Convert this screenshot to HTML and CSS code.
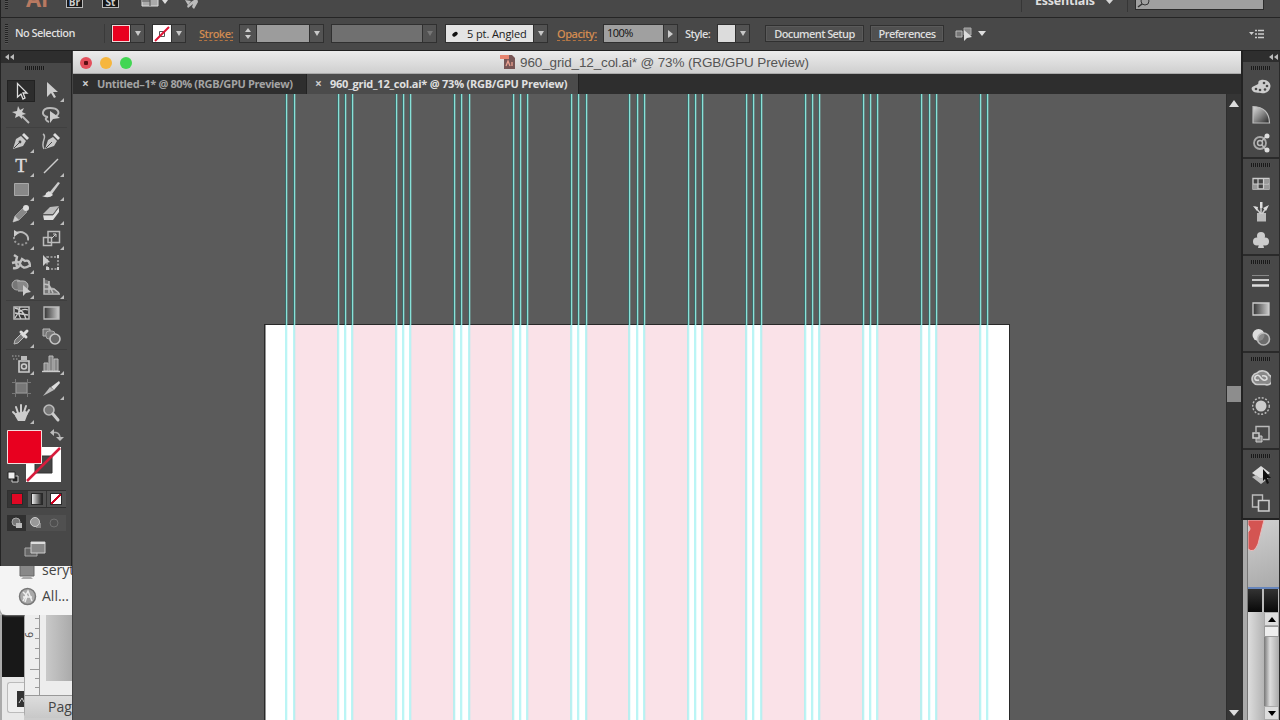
FILE: index.html
```
<!DOCTYPE html>
<html lang="en">
<head>
<meta charset="utf-8">
<title>960_grid_12_col.ai</title>
<link rel="stylesheet" href="styles.css">
</head>
<body>
<header class="appbar">
  <i class="grip-v"></i><b class="ai">Ai</b><span class="mini">Br</span><span class="mini st">St</span>
  <svg class="arrange" width="30" height="17"><path d="M1 -2H17V6H1Z" fill="#aaa" stroke="#ddd"/><path d="M9 -2V6M1 1H9" stroke="#555"/><path d="M21 0H27L24 4Z" fill="#ddd"/></svg>
  <svg class="rocket" width="18" height="17"><path d="M1 0L7 1L4 5ZM7 2L13 -2L14 2L10 9L8 7L9 4L4 8L3 6Z" fill="#bcbcbc"/></svg>
  <div class="workspace"><span>Essentials</span><svg width="8" height="6"><path d="M0 0H7L3.5 4Z" fill="#d5d5d5"/></svg></div>
  <div class="search"><svg width="16" height="8"><circle cx="9" cy="1" r="4" fill="none" stroke="#333"/><path d="M6 4L2 7" stroke="#333" stroke-width="1.5"/></svg></div>
</header>
<div class="control">
  <i class="grip-v"></i><span class="nosel">No Selection</span>
  <div class="combo fill"><i class="sw red"></i><i class="dd"></i></div>
  <div class="combo strk"><svg class="sw" width="18" height="18"><path d="M0 0H18V18H0Z" fill="#fff"/><path d="M6.500 6.500H11.500V11.500H6.500Z" fill="none" stroke="#555"/><path d="M2 16L16 2" stroke="#dc1434" stroke-width="2"/></svg><i class="dd"></i></div>
  <a class="link stroke-label">Stroke:</a>
  <div class="combo weight"><i class="step"></i><i class="field"></i><i class="dd big"></i></div>
  <div class="combo profile"><i class="field"></i><i class="dd dim"></i></div>
  <div class="combo brush"><span class="field"><svg width="8" height="8"><path d="M3 5L5 3.500" stroke="#111" stroke-width="3.500" stroke-linecap="round"/></svg>5 pt. Angled</span><i class="dd big"></i></div>
  <a class="link opacity-label">Opacity:</a>
  <div class="combo opacity"><span class="field">100%</span><i class="dd flyout"></i></div>
  <span class="style-label">Style:</span>
  <div class="combo style"><i class="sw"></i><i class="dd big"></i></div>
  <button class="btn setup">Document Setup</button><button class="btn prefs">Preferences</button>
  <svg class="align" width="32" height="16"><path d="M1 5H7V11H1Z" fill="#777" stroke="#bbb"/><path d="M9 2H16V9H9Z" fill="#888" stroke="#aaa"/><path d="M9 4V15L12 12L17 11Z" fill="#ddd"/><path d="M23 5H31L27 10Z" fill="#ddd"/></svg>
  <svg class="menu" width="16" height="12"><path d="M0 4H5L2.500 7Z" fill="#ccc"/><path d="M6 2.500H8M9 2.500H15M6 6H8M9 6H15M6 9.500H8M9 9.500H15" stroke="#ccc" stroke-width="1.500"/></svg>
</div>
<main class="work">
  <aside class="left">
    <section class="toolbox">
      <div class="collapse"><svg width="9" height="6"><path d="M4 0V6L0 3ZM9 0V6L5 3Z" fill="#bbb"/></svg></div>
      <i class="grip"></i>
      <div class="tools g1">
        <span class="tool active"><svg viewBox="0 0 20 20"><path d="M6.500 2.500V16L10 13L12 18L14 17L12 12L16 12Z" fill="#222" stroke="#ddd" stroke-width="1.300"/></svg></span>
        <span class="tool sub"><svg viewBox="0 0 20 20"><path d="M6 1V16L10 12L13 17L15 16L12 11L17 11Z" fill="#ccc"/></svg></span>
        <span class="tool"><svg viewBox="0 0 20 20"><path d="M7 1L9 5L13 3L11 7L15 9L11 10L11 14L8 11L4 13L5 9L1 7L6 6Z" fill="#ccc"/><path d="M11 11L18 18" stroke="#bbb" stroke-width="2"/></svg></span>
        <span class="tool"><svg viewBox="0 0 20 20"><path d="M7 12C-1 11 1 3 9 3S20 8 15 11M7 12C3 13 5 16 8 17" fill="none" stroke="#b8b8b8" stroke-width="2"/><path d="M9 6V18L12 14L19 13Z" fill="#ccc"/></svg></span>
      </div>
      <div class="tools g2">
        <span class="tool sub"><svg viewBox="0 0 20 20"><path d="M2 17L5 7L10 4L15 9L12 14Z" fill="#c8c8c8"/><path d="M11 3L13 1L18 6L16 8Z" fill="#ddd"/><path d="M3 16L9 10" stroke="#484848"/><circle cx="9" cy="10" r="1.400" fill="#484848"/></svg></span>
        <span class="tool"><svg viewBox="0 0 20 20"><path d="M4 17L7 8L12 5L16 9L13 14Z" fill="#c8c8c8"/><path d="M12 3L14 1L19 6L17 8Z" fill="#ddd"/><path d="M5 16L11 10" stroke="#484848"/><path d="M2 2C7 5-1 9 3 17" fill="none" stroke="#bbb" stroke-width="1.500"/></svg></span>
        <span class="tool sub type">T</span>
        <span class="tool sub"><svg viewBox="0 0 20 20"><path d="M3 17L17 3" stroke="#ccc" stroke-width="1.500"/></svg></span>
        <span class="tool sub"><svg viewBox="0 0 20 20"><path d="M3.500 3.500H17.500V15.500H3.500Z" fill="#888" stroke="#a8a8a8"/></svg></span>
        <span class="tool sub"><svg viewBox="0 0 20 20"><path d="M8 13L17 2L19 3L11 14Z" fill="#ccc"/><path d="M8 11L12 15Q8 19 1 16Q5 16 5 13Z" fill="#ddd"/></svg></span>
        <span class="tool sub"><svg viewBox="0 0 20 20"><path d="M2 18L4 12L12 4L16 8L8 16Z" fill="#888" stroke="#999"/><circle cx="15" cy="4" r="3" fill="#ddd"/><path d="M2 18L4 12L8 16Z" fill="#ccc"/></svg></span>
        <span class="tool sub"><svg viewBox="0 0 20 20"><path d="M9 3L18 2L12 10H2Z" fill="#bbb"/><path d="M2 11H12V16H3ZM12 11L18 3V8L12 16Z" fill="#ddd"/><path d="M2 11H12L18 3" fill="none" stroke="#666"/></svg></span>
      </div>
      <div class="tools g3">
        <span class="tool sub"><svg viewBox="0 0 20 20"><path d="M4 6C11 1 18 7 17 12" fill="none" stroke="#bbb" stroke-width="2"/><path d="M3 2V9L8 5Z" fill="#ccc"/><path d="M3 9C2 17 15 20 17 12" fill="none" stroke="#999" stroke-width="2" stroke-dasharray="2 2"/></svg></span>
        <span class="tool sub"><svg viewBox="0 0 20 20"><path d="M7 3.500H18.500V14.500H7ZM2.500 9.500H10.500V17.500H2.500Z" fill="none" stroke="#bbb" stroke-width="1.500"/><path d="M10 11L15 6M12 6H15V9" fill="none" stroke="#ccc"/></svg></span>
        <span class="tool sub"><svg viewBox="0 0 20 20"><path d="M3 2L6 4L5 8L9 10L11 6L14 8Q19 6 19 14M2 15Q8 16 9 11Q12 17 18 13M1 10L5 9L6 14" fill="none" stroke="#c0c0c0" stroke-width="2.400"/></svg></span>
        <span class="tool"><svg viewBox="0 0 20 20"><path d="M6 4H17V16H6Z" fill="none" stroke="#aaa" stroke-width="1.500" stroke-dasharray="2 1.500"/><path d="M16 2H18V5H16ZM16 14H18V17H16ZM5 14H8V17H5Z" fill="#ccc"/><path d="M2 2V13L5 10L9 9Z" fill="#ccc"/></svg></span>
        <span class="tool sub"><svg viewBox="0 0 20 20"><circle cx="6" cy="8" r="5" fill="#777" stroke="#aaa"/><path d="M6 4H12A5 5 0 0 1 12 14H7" fill="#888" stroke="#bbb"/><path d="M12 8V19L15 16L20 15Z" fill="#ccc"/></svg></span>
        <span class="tool sub"><svg viewBox="0 0 20 20"><path d="M3 2L8 4V9L13 11L18 16H3Z" fill="#777"/><path d="M3 1V17H19M8 4V16M3 7L8 8L12 16M3 12L13 12L18 16" fill="none" stroke="#c0c0c0" stroke-width="1.500"/></svg></span>
      </div>
      <div class="tools g4">
        <span class="tool"><svg viewBox="0 0 20 20"><path d="M3 4H18V16H3Z" fill="#383838" stroke="#bbb" stroke-width="1.500"/><path d="M4 15Q10 4 17 7M4 5Q13 7 15 16M4 10L17 12M9 4Q6 10 10 16" fill="none" stroke="#ccc" stroke-width="1.300"/></svg></span>
        <span class="tool"><svg viewBox="0 0 20 20"><path d="M3 4H18V16H3Z" fill="url(#gr)" stroke="#bbb" stroke-width="1.300"/></svg></span>
        <span class="tool sub"><svg viewBox="0 0 20 20"><path d="M3 17L4 13L10 7L13 10L7 16Z" fill="#777" stroke="#bbb"/><path d="M10 5L15 10M12 8L16 4" stroke="#ddd" stroke-width="3" stroke-linecap="round"/></svg></span>
        <span class="tool"><svg viewBox="0 0 20 20"><path d="M2 2H9V9H2Z" fill="#777" stroke="#bbb"/><rect x="5" y="4" width="9" height="8" rx="3" fill="#777" stroke="#aaa"/><circle cx="14" cy="12" r="5" fill="#666" stroke="#c5c5c5" stroke-width="1.600"/></svg></span>
      </div>
      <div class="tools g5">
        <span class="tool sub"><svg viewBox="0 0 20 20"><path d="M8 7H18V18H8Z" fill="#555" stroke="#ccc" stroke-width="1.600"/><path d="M10 2H16V6H10Z" fill="#bbb"/><circle cx="13" cy="12.500" r="2.500" fill="none" stroke="#ccc" stroke-width="1.500"/><path d="M1 2H9M2 5H8" stroke="#aaa" stroke-dasharray="1.500 1.500"/></svg></span>
        <span class="tool sub"><svg viewBox="0 0 20 20"><path d="M3 9H7V17H3ZM8 2H12V17H8ZM13 5H17V17H13Z" fill="#888" stroke="#bbb"/><path d="M1 17.500H19" stroke="#ccc" stroke-width="1.400"/></svg></span>
        <span class="tool"><svg viewBox="0 0 20 20"><path d="M5 5H16V15H5Z" fill="#777" stroke="#999"/><path d="M1 4.500H20M1 15.500H20M4.500 1V19M16.500 1V19" stroke="#777"/></svg></span>
        <span class="tool sub"><svg viewBox="0 0 20 20"><path d="M2 18L9 9L13 12Z" fill="#bbb"/><path d="M10 9L18 3L19 5L13 12Z" fill="#ddd"/></svg></span>
        <span class="tool sub"><svg viewBox="0 0 20 20"><path d="M7 10L5 4M10 9V2M13 9L15 3M15 12L18 7M6 13L2 9" stroke="#ccc" stroke-width="2" stroke-linecap="round"/><path d="M5 10L15 8L17 10L14 18H7L4 13Z" fill="#ccc"/></svg></span>
        <span class="tool"><svg viewBox="0 0 20 20"><circle cx="8" cy="7" r="5" fill="#777" stroke="#bbb" stroke-width="1.600"/><path d="M12 11L17 17" stroke="#ccc" stroke-width="3" stroke-linecap="round"/></svg></span>
      </div>
      <svg class="colors" width="64" height="62"><path d="M20 21H55V56H20Z" fill="#fff"/><path d="M29 30H46V47H29Z" fill="#444" stroke="#333"/><path d="M21 55L54 22" stroke="#d71c3c" stroke-width="2.500"/><path d="M1.500 4.500H35.500V37.500H1.500Z" fill="#e8001f" stroke="#f2dede"/><path d="M46 6.500H50Q54 7 54 13" fill="none" stroke="#aaa" stroke-width="1.700"/><path d="M48 3V10L44 6.500ZM50 11H58L54 15Z" fill="#bbb"/><path d="M6 50H12V56H6Z" fill="#222" stroke="#ccc"/><path d="M2 46H9V53H2Z" fill="#eee" stroke="#222"/></svg>
      <div class="modes"><i><b class="m-red"></b></i><i><b class="m-gray"></b></i><i><b class="m-none"></b></i></div>
      <div class="draws">
        <svg class="pressed" viewBox="0 0 19 16"><circle cx="9" cy="7" r="4" fill="#777" stroke="#aaa"/><path d="M9 8H15V13H9Z" fill="#bbb"/></svg>
        <svg viewBox="0 0 19 16"><path d="M10 8H15V13H10Z" fill="#888"/><circle cx="9" cy="7" r="4.500" fill="#999" stroke="#ccc"/></svg>
        <svg viewBox="0 0 19 16"><circle cx="9" cy="8" r="4" fill="#505050" stroke="#707070"/></svg>
      </div>
      <svg class="screen" width="24" height="18"><path d="M2 8H14V16H2Z" fill="#666" stroke="#aaa"/><path d="M8 2H22V13H8Z" fill="#888" stroke="#ccc"/><path d="M8 3H22" stroke="#ddd" stroke-width="2"/></svg>
    </section>
    <section class="behind-left">
      <div class="popup">
        <div class="row"><svg width="18" height="16"><path d="M2 -2H16V10H2Z" fill="#888" stroke="#666"/><path d="M5 11H13L15 13H3Z" fill="#aaa"/></svg><span>seryt</span></div>
        <div class="row all"><svg width="19" height="19"><circle cx="9.500" cy="9.500" r="8" fill="#aaa" stroke="#777" stroke-width="1.500"/><path d="M5 14L10 4L14 14M5 10H14M5 5L9 9L7 15" fill="none" stroke="#eee" stroke-width="1.500"/></svg><span>All...</span></div>
      </div>
      <div class="under"><div class="strip"><i></i><span><svg width="12" height="18"><path d="M3 1H12V17H3Z" fill="#333"/><path d="M5 13L8 8L10 12L12 9" stroke="#ccc" fill="none"/></svg></span></div>
        <div class="sheet"><div class="ruler"><svg width="15" height="80"><path d="M14.500 0V80M10 3.500H15M10 13.500H15M10 23.500H15M10 33.500H15M10 43.500H15M5 54.500H15M10 63.500H15M10 72.500H15" stroke="#999"/></svg><b>6</b><i></i></div><div class="page">Page</div></div>
      </div>
    </section>
  </aside>
  <section class="doc">
    <div class="titlebar"><i class="dot close"></i><i class="dot min"></i><i class="dot max"></i>
      <svg class="file" width="16" height="16"><path d="M4 1H12L15 4V15H4Z" fill="#755" /><path d="M0 1H9V5H0Z" fill="#e68570"/><path d="M6 12L8 7L10 12M12 8V12" stroke="#eaa090" fill="none" stroke-width="1.300"/></svg>
      <span class="title">960_grid_12_col.ai* @ 73% (RGB/GPU Preview)</span></div>
    <nav class="tabs"><div class="tab"><i>×</i><span>Untitled–1* @ 80% (RGB/GPU Preview)</span></div><div class="tab current"><i>×</i><span>960_grid_12_col.ai* @ 73% (RGB/GPU Preview)</span></div></nav>
    <div class="view">
      <svg class="canvas" id="canvas" width="1154" height="626"></svg>
      <div class="scroll"><svg width="10" height="7"><path d="M0 7L5 0L10 7Z" fill="#ddd"/></svg><i></i><svg width="10" height="7"><path d="M0 0H10L5 6Z" fill="#ddd"/></svg></div>
    </div>
  </section>
  <aside class="right">
    <div class="dock">
      <div class="collapse"><svg width="9" height="6"><path d="M4 0V6L0 3ZM9 0V6L5 3Z" fill="#bbb"/></svg></div>
      <section class="panel"><i class="grip"></i>
        <svg viewBox="0 0 20 20"><path d="M10 3C16 2 19.500 6 19.500 9C19 15 14 17 10 16C7 15 3 17 1 13C-1 9 5 9 7 7C8 6 6 4 10 3Z" fill="#cdcdcd"/><g fill="#484848"><circle cx="13" cy="6" r="1.300"/><circle cx="16" cy="9" r="1.300"/><circle cx="14" cy="12.500" r="1.300"/><circle cx="9" cy="13" r="1.300"/><circle cx="5" cy="12" r="1.300"/></g></svg>
        <svg viewBox="0 0 20 20"><path d="M2 1.500Q18 2 18.500 18H2Z" fill="url(#gg)" stroke="#bbb" stroke-width="1.200"/></svg>
        <svg viewBox="0 0 20 20"><circle cx="9" cy="10" r="6" fill="none" stroke="#aaa" stroke-width="1.800"/><circle cx="9" cy="10" r="2.500" fill="none" stroke="#bbb" stroke-width="1.500"/><path d="M11 8L16 2M11 12L16 18" stroke="#bbb" stroke-width="1.500"/><circle cx="16" cy="3" r="2.500" fill="#ddd"/><circle cx="16" cy="17" r="2.500" fill="#ddd"/></svg>
      </section>
      <section class="panel"><i class="grip"></i>
        <svg viewBox="0 0 20 20"><path d="M2 4.500H18V15H2Z" fill="#444" stroke="#ccc" stroke-width="1.300"/><path d="M12 5H18V9.500H12ZM2 10H7V15H2ZM12 10H18V15H12Z" fill="#999"/><path d="M7 5V15M12.500 5V15M2 10H18" stroke="#ccc" stroke-width="1.200"/></svg>
        <svg viewBox="0 0 20 20"><path d="M6 11H15V19.500H6Z" fill="#bbb"/><path d="M10 12L4 5M10 12V3M11 12L15 6" stroke="#ccc" stroke-width="1.500"/><path d="M2 4L7 5L6 9ZM9 0H11.500V6H9ZM12 6L18 3L15 9Z" fill="#ddd"/></svg>
        <svg viewBox="0 0 20 20"><circle cx="10" cy="6" r="4" fill="#ccc"/><circle cx="6" cy="11.500" r="4" fill="#ccc"/><circle cx="14" cy="11.500" r="4" fill="#ccc"/><path d="M9 9H11L13 18H7Z" fill="#ccc"/></svg>
      </section>
      <section class="panel"><i class="grip"></i>
        <svg viewBox="0 0 20 20"><path d="M1 4.500H18" stroke="#888"/><path d="M1 9H18" stroke="#ccc" stroke-width="2"/><path d="M1 14.500H18" stroke="#ddd" stroke-width="2.500"/></svg>
        <svg viewBox="0 0 20 20"><path d="M2 4H18V16H2Z" fill="url(#gr)" stroke="#ccc" stroke-width="1.300"/></svg>
        <svg viewBox="0 0 20 20"><circle cx="7.500" cy="8" r="6" fill="#ddd"/><circle cx="12.500" cy="12" r="6" fill="#777" fill-opacity=".8" stroke="#bbb" stroke-width="1.600"/></svg>
      </section>
      <section class="panel"><i class="grip"></i>
        <svg viewBox="0 0 20 20"><path d="M6 16.500H14A5 5 0 0 0 18 7A7 6 0 0 0 6 5A6 6 0 0 0 2 14Q4 16.500 6 16.500Z" fill="#888" stroke="#ccc" stroke-width="1.700"/><path d="M8 12Q3 13 4 9Q7 5 10 10Q13 14 16 11Q16 7 11 8" fill="none" stroke="#ddd" stroke-width="1.600"/></svg>
        <svg viewBox="0 0 20 20"><circle cx="10" cy="10" r="5.500" fill="#ccc"/><circle cx="10" cy="10" r="8.300" fill="none" stroke="#bbb" stroke-width="1.400" stroke-dasharray="2 1.600"/></svg>
        <svg viewBox="0 0 20 20"><path d="M5 8V2.500H18V15.500H12" fill="none" stroke="#bbb" stroke-width="1.400"/><path d="M5 12H11V18H5Z" fill="#888" stroke="#ccc"/><path d="M2 9H8V14H2Z" fill="#555" stroke="#ccc" stroke-width="1.500"/></svg>
      </section>
      <section class="panel last"><i class="grip"></i>
        <svg viewBox="0 0 20 20"><path d="M10 1L19 8L10 14L1 8Z" fill="#ddd"/><path d="M1 12L5 10L10 14L15 10L19 12L10 19Z" fill="#bbb"/><path d="M12 4L20 13L16 13L18 18L16 19L14 14L12 16Z" fill="#111"/></svg>
        <svg viewBox="0 0 20 20"><path d="M1.500 2H11.500V14H1.500Z" fill="none" stroke="#bbb" stroke-width="1.400"/><path d="M7.500 7.500H18V18H7.500Z" fill="#484848" stroke="#ccc" stroke-width="1.600"/></svg>
      </section>
    </div>
    <div class="behind-right"><i class="edge"></i><div class="rcontent">
      <svg class="pic" width="31" height="69"><path d="M0 0H16L10 24Q6 34 0 29V12Q4 9 0 5Z" fill="#d45552" stroke="#e9bcbc"/></svg>
      <div class="black"><i></i><i></i></div>
      <div class="rbottom"><i class="sheetbg"></i><div class="rscroll"><b><svg width="8" height="5"><path d="M0 5L4 0L8 5Z"/></svg></b><u></u><i></i><b><svg width="8" height="5"><path d="M0 0H8L4 5Z"/></svg></b></div></div>
    </div></div>
  </aside>
</main>
<svg class="defs" width="0" height="0"><defs><linearGradient id="gr"><stop stop-color="#333"/><stop offset="1" stop-color="#ccc"/></linearGradient><linearGradient id="gg" x1="0" y1="0" x2="1" y2="1"><stop stop-color="#ddd"/><stop offset=".5" stop-color="#888"/><stop offset="1" stop-color="#222"/></linearGradient></defs></svg>
<script src="grid.js"></script>
</body>
</html>
```
FILE: styles.css
```
* { box-sizing: border-box; }
body { margin: 0; width: 1280px; height: 720px; overflow: hidden; display: flex; flex-direction: column; background: #484848; font-family: "Open Sans", "Noto Sans", sans-serif; font-size: 11px; color: #dedede; }
svg { display: block; flex: none; }
i, b, u { display: block; font-style: normal; text-decoration: none; flex: none; }
.defs { position: absolute; }
.appbar { height: 18px; flex: none; display: flex; align-items: flex-start; overflow: hidden; border-bottom: 1px solid #252525; border-left: 1px solid #222; }
.grip-v { width: 3px; height: 20px; margin-left: 4px; background: repeating-linear-gradient(#222 0 1px, #555 1px 2px); }
.appbar .grip-v { height: 9px; }
.ai { margin: -18px 0 0 18px; width: 40px; font: bold 22px/33px "Open Sans", sans-serif; color: #b87961; }
.mini { margin-top: -8px; width: 17px; height: 16px; background: #171717; border: 1px solid #bbb; font: bold 10px/18px "Open Sans", sans-serif; text-align: center; color: #ccc; }
.mini.st { margin-left: 19px; }
.arrange { margin-left: 22px; }
.rocket { margin-left: 13px; }
.workspace { margin-left: 819px; width: 107px; height: 12px; border: solid #363636; border-width: 0 1px; padding-left: 13px; display: flex; gap: 9px; align-items: flex-start; font-weight: 700; font-size: 12.5px; letter-spacing: -.2px; }
.workspace span { margin-top: -8px; line-height: 18px; width: 62px; }
.search { margin-left: 7px; width: 129px; height: 10px; background: #a0a0a0; border: solid #2c2c2c; border-width: 0 1px 1px; }
.control { height: 33px; padding-bottom: 1px; flex: none; display: flex; align-items: center; border-bottom: 1px solid #202020; border-left: 1px solid #222; white-space: nowrap; font-weight: 600; }
.nosel { margin-left: 7px; width: 90px; height: 19px; line-height: 17px; border-right: 1px solid #3a3a3a; letter-spacing: -.55px; }
.combo { display: flex; height: 19px; border: 1px solid #303030; background: #303030; gap: 1px; flex: none; }
.fill { margin-left: 6px; }
.strk { margin-left: 7px; }
.sw { width: 18px; height: 17px; background: #dcdcdc; }
.red { background: #e8001f; border: 1px solid #f2d6d6; }
.dd { width: 13px; background: #535353; display: grid; place-items: center; }
.dd::after { content: ""; border: 3px solid transparent; border-top: 5px solid #c8c8c8; border-bottom: 0; }
.big::after { border-width: 5px 3.5px 0; }
.dim::after { border-top-color: #777; }
.flyout::after { border: 4px solid transparent; border-left: 5px solid #ccc; border-right: 0; }
.link { color: #d18b51; height: 15px; line-height: 15px; border-bottom: 1px dashed #b47342; }
.stroke-label { margin-left: 13px; width: 34px; letter-spacing: -.5px; }
.weight { margin-left: 6px; }
.step { width: 16px; background: #525252; display: flex; flex-direction: column; align-items: center; justify-content: center; gap: 3px; }
.step::before { content: ""; border: 3px solid transparent; border-top: 0; border-bottom: 4px solid #ccc; }
.step::after { content: ""; border: 3px solid transparent; border-bottom: 0; border-top: 4px solid #ccc; }
.field { background: #9c9c9c; width: 52px; color: #202020; font-weight: 400; line-height: 16px; }
.profile { margin-left: 7px; }
.profile .field { width: 90px; background: #707070; }
.brush { margin-left: 8px; }
.brush .field { background: #e4e4e4; width: 87px; display: flex; align-items: center; gap: 8px; padding-left: 5px; letter-spacing: -.1px; }
.opacity-label { margin-left: 9px; width: 40px; letter-spacing: -.5px; }
.opacity { margin-left: 6px; }
.opacity .field { width: 59px; padding-left: 3px; background: #a0a0a0; color: #111; letter-spacing: -.5px; }
.style-label { margin-left: 7px; width: 26px; letter-spacing: -.6px; }
.style { margin-left: 6px; }
.style .sw { width: 17px; }
.btn { height: 17px; padding: 0; border: 1px solid #303030; outline: 1px solid #5a5a5a; outline-offset: -2px; background: #505050; color: #ddd; font: 600 11px/14px "Open Sans", sans-serif; letter-spacing: -.6px; }
.setup { width: 99px; margin-left: 15px; }
.prefs { width: 74px; margin-left: 6px; }
.align { margin-left: 11px; }
.menu { margin-left: auto; margin-right: 15px; }
.work { height: 669px; display: flex; flex: none; }
.left { width: 72px; flex: none; }
.toolbox { height: 515px; border: solid #242424; border-width: 0 1px; background: #484848; }
.collapse { height: 12px; background: #2e2e2e; padding: 3px 0 0 4px; }
.grip { width: 20px; height: 4px; margin: 0 auto; background: repeating-linear-gradient(90deg, #191919 0 1px, #4b4b4b 1px 2px); }
.toolbox .grip { margin: 3px 0 0 24px; }
.tools { display: grid; grid-template-columns: 30px 30px; grid-auto-rows: 24px; margin: 0 4px 0 5px; }
.g1 { margin-top: 9px; border-bottom: 1px solid #404040; }
.g2 { margin-top: 2px; }
.g3 { margin-top: 0; grid-auto-rows: 24.5px; border-bottom: 1px solid #3e3e3e; }
.g4 { border-bottom: 1px solid #3e3e3e; }
.g5 { margin-top: 2px; grid-auto-rows: 24.5px; }
.tool { position: relative; display: grid; place-items: center; }
.tool svg { width: 20px; height: 20px; }
.active { background: #2d2d2d; border: 1px solid #222; height: 22px; width: 28px; margin: 1px; }
.sub::after { content: ""; position: absolute; right: 2px; bottom: 1px; border: solid transparent; border-width: 0 0 4px 4px; border-bottom-color: #bbb; }
.type { font: 19px/20px "Liberation Serif", serif; color: #ddd; -webkit-text-stroke: .4px #ddd; }
.colors { margin: 1px 0 0 5px; }
.modes, .draws { display: flex; width: 59px; margin-left: 6px; background: #353535; gap: 1px; }
.modes { height: 18px; margin-top: 2px; border: 1px solid #303030; }
.modes i { width: 18.5px; padding: 2px 3px; }
.modes i + i { background: #525252; }
.modes b { width: 12px; height: 12px; border: 1px solid #292929; }
.m-red { background: #e00824; } .m-gray { background: linear-gradient(90deg, #eee, #222); } .m-none { background: linear-gradient(135deg, #fff 43%, #d00020 43% 57%, #fff 57%); }
.draws { height: 16px; margin-top: 7px; background: #505050; gap: 0; }
.draws svg { width: 19px; height: 16px; } .pressed { background: #303030; }
.screen { margin: 9px 0 0 22px; }
.behind-left { height: 154px; background: #ccc; overflow: hidden; color: #444; font: 14px/18px "Open Sans", sans-serif; }
.popup { height: 49px; background: #f4f4f4; border-radius: 0 0 0 6px; padding-left: 18px; box-shadow: 0 1px 2px #777; position: relative; }
.row { display: flex; gap: 6px; height: 17px; }
.row span { margin-top: -5px; }
.row.all { height: 30px; padding-top: 4px; gap: 5px; }
.row.all span { margin-top: 0; }
.under { display: flex; height: 105px; }
.strip { width: 24px; background: #e8e8e8; border-left: 2px solid #aaa; }
.strip i { height: 62px; background: #181818; }
.strip span { display: block; margin: 5px 0 0 5px; height: 31px; padding: 7px 0 0 6px; border: 1px solid #bbb; border-right: 0; border-radius: 3px 0 0 3px; background: #eee; }
.sheet { width: 48px; height: 103px; background: #dadada; border-left: 1px solid #aaa; border-radius: 0 0 0 5px; }
.ruler { height: 80px; display: flex; background: #ededed; position: relative; }
.ruler b { position: absolute; left: 1px; top: 12px; font: 10px/16px "Open Sans", sans-serif; transform: rotate(-90deg); }
.ruler i { margin-left: 6px; width: 26px; height: 66px; background: linear-gradient(90deg, #c9c9c9, #aaa); }
.page { padding: 2px 0 0 23px; height: 23px; line-height: 18px; border-top: 1px solid #999; background: linear-gradient(#ddd, #c8c8c8); }
.doc { width: 1169px; flex: none; display: flex; flex-direction: column; border-left: 1px solid #444; }
.titlebar { height: 23px; flex: none; display: flex; align-items: center; background: linear-gradient(#ececec, #cfcfcf); border-bottom: 1px solid #aaa; padding-left: 7px; padding-bottom: 0; }
.dot { width: 12px; height: 12px; border-radius: 50%; margin: 1px 8px 0 0; }
.close { background: radial-gradient(#5c1015 0 2px, #e3505c 2.5px); } .min { background: #f6b63e; } .max { background: #42d653; }
.file { margin-left: 360px; }
.title { margin-left: 4px; margin-top: 1px; font: 13.5px/20px "Liberation Sans", sans-serif; letter-spacing: -.13px; color: #555; white-space: nowrap; }
.tabs { height: 20px; flex: none; display: flex; background: #2e2e2e; font-size: 11px; line-height: 19px; font-weight: 700; white-space: nowrap; }
.tab { width: 234px; display: flex; color: #a3a3a3; border-right: 1px solid #222; padding-left: 9px; letter-spacing: -.37px; }
.tab i { width: 15px; font-size: 12px; line-height: 19px; color: #ccc; }
.current { width: 272px; background: #4b4b4b; color: #e0e0e0; padding-left: 8px; letter-spacing: -.23px; }
.view { display: flex; height: 626px; }
.canvas { width: 1153px; background: #5b5b5b; }
.scroll { width: 15px; background: #353535; display: flex; flex-direction: column; align-items: center; padding: 6px 0 3px; border-left: 1px solid #2e2e2e; }
.scroll i { width: 14px; height: 16px; background: #8d8d8d; margin: 279px 0 auto; }
.right { width: 39px; flex: none; border-right: 1px solid #2a2a2a; }
.dock { height: 469px; background: #484848; border: solid #222; border-width: 0 0 2px 2px; }
.dock .collapse { padding: 3px 0 0 26px; height: 11px; }
.panel { height: 97px; padding-top: 4px; border-bottom: 2px solid #2a2a2a; display: flex; flex-direction: column; align-items: center; }
.panel .grip { margin: 0 0 3px; }
.panel svg { width: 20px; height: 20px; margin: 4px 0; }
.last { height: 68px; border: 0; }
.behind-right { display: flex; height: 200px; background: #888; }
.edge { width: 7px; border-left: 2px solid #333; border-right: 1px solid #777; background: #aaa; }
.rcontent { width: 31px; }
.pic { width: 31px; background: linear-gradient(160deg, #d0d0d0, #aaa); border-bottom: 2px solid #6685bb; }
.black { height: 23px; display: flex; gap: 2px; background: #bbb; }
.black i { width: 14px; background: linear-gradient(#333, #080808); }
.rbottom { height: 108px; display: flex; }
.sheetbg { width: 16px; background: linear-gradient(90deg, #ddd, #b4b4b4); }
.rscroll { width: 15px; background: linear-gradient(90deg, #777, #ddd 40%, #aaa); display: flex; flex-direction: column; }
.rscroll b { height: 14px; background: #ddd; border: 1px solid #aaa; display: grid; place-items: center; }
.rscroll u { height: 11px; background: #eee; border: 1px solid #999; }
.rscroll i { flex: 1; }
```
FILE: grid.js
```
const NS = "http://www.w3.org/2000/svg";
const canvas = document.getElementById("canvas");
const originX = 73;
function rect(x, y, width, height, fill, opacity = 1) {
  const node = document.createElementNS(NS, "rect");
  const attrs = { x: x - originX, y, width, height, fill, opacity };
  for (const key in attrs) node.setAttribute(key, attrs[key]);
  canvas.append(node);
}
rect(264, 230, 746, 396, "#292929");
rect(265.5, 231, 743.5, 395, "#fff");
const gutter = 58.38;
const guides = [286, 294, 980, 987.5];
for (let n = 0; n < 12; n++) {
  const left = 294 + n * gutter;
  rect(left, 231, 44, 395, "#fae2e8");
  if (n < 11) guides.push(left + 44, left + 51.2, left + 58.5);
}
for (const x of guides) {
  const px = Math.floor(x);
  rect(px - 1, 0, 1, 231, "#287370", .6);
  rect(px, 0, 1.3, 231, "#8ae9df", .95);
  rect(px - 1, 231, 2.3, 395, "#a4f2f2", .75);
}
```
